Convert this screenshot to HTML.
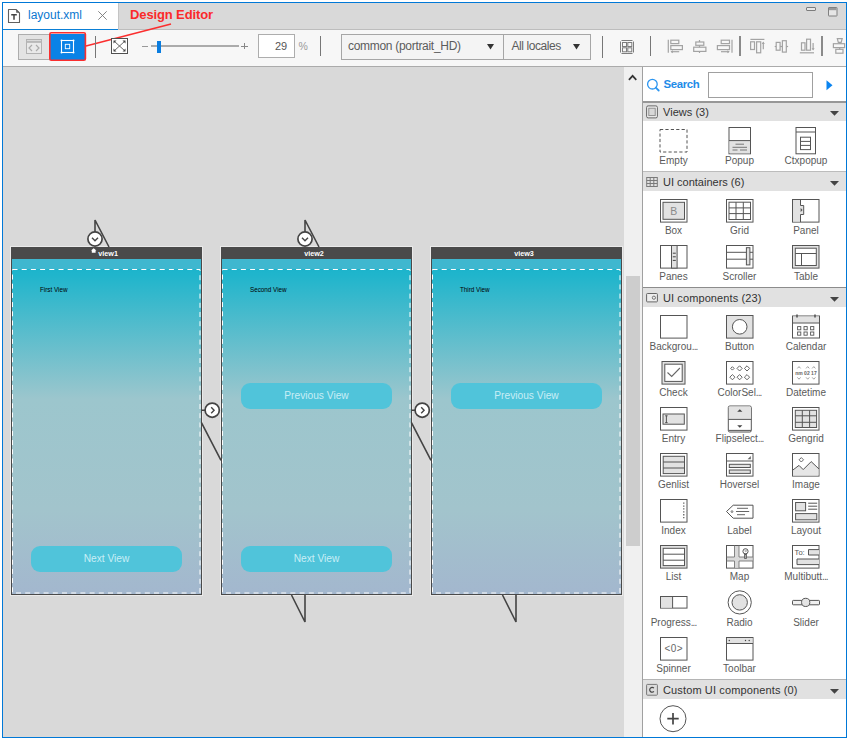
<!DOCTYPE html>
<html lang="en"><head><meta charset="utf-8"><title>layout.xml - Design Editor</title>
<style>
html,body{margin:0;padding:0;background:#fff;}
body{width:850px;height:741px;position:relative;overflow:hidden;font-family:"Liberation Sans",sans-serif;color:#555;}
.a{position:absolute;}
.t{position:absolute;white-space:nowrap;line-height:1;}
svg{position:absolute;overflow:visible;}
.lbl{position:absolute;white-space:nowrap;font-size:10px;line-height:12px;text-align:center;width:80px;color:#5a5a5a;}
.hdr{position:absolute;left:643px;width:203px;height:19px;background:#e1e1e1;}
.hdt{position:absolute;left:663px;white-space:nowrap;font-size:11px;line-height:12px;color:#333;}
.btn{position:absolute;width:151px;height:26px;border-radius:9px;background:#50c4da;color:#c9eef6;font-size:10.2px;line-height:26px;text-align:center;}
.vt{position:absolute;white-space:nowrap;font-size:7.2px;font-weight:700;color:#fff;line-height:8px;}
.vl{position:absolute;white-space:nowrap;font-size:6.3px;color:#000;line-height:8px;}
</style></head>
<body>
<div class="a" style="left:2px;top:2px;width:845px;height:736px;background:#0078d7;"></div>
<div class="a" style="left:3px;top:3px;width:843px;height:734px;background:#fff;"></div>
<div class="a" style="left:3px;top:3px;width:843px;height:27px;background:#d9d9d9;"></div>
<div class="a" style="left:3px;top:29px;width:843px;height:1px;background:#bdbdbd;"></div>
<div class="a" style="left:3px;top:3px;width:115px;height:27px;background:#fff;"></div>
<div class="a" style="left:118px;top:3px;width:1px;height:27px;background:#c4c4c4;"></div>
<div class="a" style="left:3px;top:28.5px;width:115px;height:1.5px;background:#0a7fd6;"></div>
<svg style="left:7px;top:8px" width="14" height="16" viewBox="0 0 14 16" ><path d="M1.5 1.5h7.5l3.5 3.5v9.5h-11z" fill="#fff" stroke="#606060" stroke-width="1.1" stroke-linejoin="round"/><path d="M9.2 1.5l3.3 3.3h-3.3z" fill="#606060"/><path d="M4.2 6.8h5.6M7 6.8v5" stroke="#444" stroke-width="1.5" fill="none"/></svg>
<div class="t" style="left:28px;top:9.03px;font-size:12px;color:#0a78d0;font-weight:400;letter-spacing:0px;">layout.xml</div>
<svg style="left:98px;top:11px" width="9" height="9" viewBox="0 0 9 9" ><path d="M0.3 0.3l8.4 8.4M8.7 0.3l-8.4 8.4" stroke="#777" stroke-width="0.9" fill="none"/></svg>
<div class="t" style="left:130px;top:8.00px;font-size:13px;color:#fb2a2a;font-weight:700;letter-spacing:-0.12px;">Design Editor</div>
<svg style="left:806px;top:7px" width="10" height="4" viewBox="0 0 10 4" ><rect x="0.5" y="0.5" width="9" height="3" rx="0.5" fill="#e8e8e8" stroke="#7c7c7c" stroke-width="1"/></svg>
<svg style="left:828px;top:7px" width="10" height="10" viewBox="0 0 10 10" ><rect x="0.5" y="0.5" width="8.5" height="8.5" rx="0.4" fill="#e6e6e6" stroke="#808080" stroke-width="1"/><rect x="1" y="1" width="7.5" height="2.2" fill="#999"/></svg>
<div class="a" style="left:3px;top:30px;width:843px;height:36px;background:#f7f7f7;"></div>
<div class="a" style="left:3px;top:66px;width:843px;height:1px;background:#ababab;"></div>
<div class="a" style="left:18px;top:34px;width:32px;height:26px;background:#e3e3e3;box-sizing:border-box;border:1px solid #adadad;"></div>
<svg style="left:26px;top:39px" width="16" height="15" viewBox="0 0 16 15" ><rect x="0.5" y="0.5" width="15" height="14" fill="#e9e9e9" stroke="#b2b2b2" stroke-width="1"/><path d="M0.5 2.8h15" stroke="#b8b8b8" stroke-width="2.2"/><path d="M6 6l-3 3l3 3M10 6l3 3l-3 3" stroke="#ababab" stroke-width="1.2" fill="none"/></svg>
<div class="a" style="left:50px;top:34px;width:35px;height:26px;background:#0a82e6;"></div>
<svg style="left:60px;top:39px" width="15" height="15" viewBox="0 0 15 15" ><rect x="1.5" y="1.5" width="12" height="12" fill="none" stroke="#fff" stroke-width="1.1"/><rect x="5.3" y="5.3" width="4.4" height="4.4" fill="none" stroke="#fff" stroke-width="0.9"/><g fill="#fff"><circle cx="1.5" cy="1.5" r="0.95"/><circle cx="13.5" cy="1.5" r="0.95"/><circle cx="1.5" cy="13.5" r="0.95"/><circle cx="13.5" cy="13.5" r="0.95"/></g></svg>
<svg style="left:0px;top:0px" width="850" height="70" viewBox="0 0 850 70" ><rect x="49.8" y="32.8" width="35.6" height="27.4" rx="1.5" fill="none" stroke="#fb2e2e" stroke-width="1.6"/><path d="M86 46L171 24" stroke="#fb2e2e" stroke-width="1.5" fill="none"/></svg>
<div class="a" style="left:95px;top:36px;width:1px;height:22px;background:#777;"></div>
<svg style="left:111px;top:38px" width="17" height="16" viewBox="0 0 17 16" ><rect x="0.5" y="0.5" width="16" height="15" fill="#fff" stroke="#505050" stroke-width="1"/><path d="M3 3l11 10M14 3l-11 10" stroke="#555" stroke-width="0.9" fill="none"/><path d="M2.5 2.5h3l-3 3zM14.5 2.5h-3l3 3zM2.5 13.5h3l-3 -3zM14.5 13.5h-3l3 -3z" fill="#444"/></svg>
<div class="a" style="left:142px;top:45.5px;width:6px;height:1px;background:#999;"></div>
<div class="a" style="left:151px;top:45px;width:88px;height:1.6px;background:#ababab;"></div>
<div class="a" style="left:157px;top:40.5px;width:4px;height:12px;background:#0a7de0;"></div>
<div class="a" style="left:241px;top:45.5px;width:6.5px;height:1px;background:#888;"></div>
<div class="a" style="left:243.7px;top:42.8px;width:1px;height:6.5px;background:#888;"></div>
<div class="a" style="left:258px;top:34px;width:36.5px;height:24px;background:#fff;box-sizing:border-box;border:1px solid #adadad;"></div>
<div class="t" style="left:275px;top:40.56px;font-size:11px;color:#555;font-weight:400;letter-spacing:0px;">29</div>
<div class="t" style="left:298.5px;top:40.98px;font-size:10.5px;color:#9a9a9a;font-weight:400;letter-spacing:0px;">%</div>
<div class="a" style="left:320px;top:36px;width:1px;height:20px;background:#777;"></div>
<div class="a" style="left:340.5px;top:34px;width:250px;height:25.5px;background:#f4f4f4;box-sizing:border-box;border:1px solid #a6a6a6;"></div>
<div class="a" style="left:503px;top:34px;width:1px;height:25.5px;background:#a6a6a6;"></div>
<div class="t" style="left:348px;top:39.83px;font-size:12px;color:#5c5c5c;font-weight:400;letter-spacing:-0.3px;">common (portrait_HD)</div>
<div class="t" style="left:511.5px;top:39.83px;font-size:12px;color:#5c5c5c;font-weight:400;letter-spacing:-0.42px;">All locales</div>
<svg style="left:487px;top:44px" width="7" height="6" viewBox="0 0 7 6" ><path d="M0 0h7l-3.5 5.4z" fill="#333"/></svg>
<svg style="left:573px;top:44px" width="7" height="6" viewBox="0 0 7 6" ><path d="M0 0h7l-3.5 5.4z" fill="#333"/></svg>
<div class="a" style="left:601.5px;top:36px;width:1px;height:21.5px;background:#777;"></div>
<svg style="left:619px;top:39px" width="16" height="16" viewBox="0 0 16 16" ><g stroke="#7d7d7d" stroke-width="1" fill="none"><path d="M2.5 1.5h11M2.5 14.5h11M1.5 2.5v11M14.5 2.5v11"/><rect x="3.5" y="3.5" width="4" height="4"/><rect x="8.8" y="3.5" width="4" height="4"/><rect x="3.5" y="8.8" width="4" height="4"/><rect x="8.8" y="8.8" width="4" height="4"/></g></svg>
<div class="a" style="left:650px;top:36px;width:1px;height:20px;background:#777;"></div>
<svg style="left:667px;top:39px" width="17" height="15" viewBox="0 0 17 15" ><g stroke="#a3a3a3" stroke-width="1.2" fill="none"><path d="M1.3 0.8v13"/><rect x="3.8" y="1.2" width="8" height="3.4"/><rect x="3.8" y="6.6" width="11.6" height="4"/><path d="M4.2 12.7h8"/></g><path d="M3.5 12.7l2.4-1.5v3z" fill="#a3a3a3"/></svg>
<svg style="left:692px;top:39px" width="16" height="15" viewBox="0 0 16 15" ><g stroke="#a3a3a3" stroke-width="1.2" fill="none"><path d="M7.5 1v13"/><rect x="3.8" y="3" width="8" height="3.3" fill="#f7f7f7"/><rect x="1.7" y="8.2" width="12.2" height="4.2" fill="#f7f7f7"/></g></svg>
<svg style="left:716px;top:39px" width="17" height="15" viewBox="0 0 17 15" ><g stroke="#a3a3a3" stroke-width="1.2" fill="none"><path d="M16 0.8v13"/><rect x="5.2" y="1.2" width="8.3" height="3.4"/><rect x="1.4" y="6.6" width="12.1" height="4"/><path d="M5 12.7h8"/></g><path d="M13.8 12.7l-2.4-1.5v3z" fill="#a3a3a3"/></svg>
<div class="a" style="left:739px;top:35.5px;width:1.6px;height:20.5px;background:#8a8a8a;"></div>
<svg style="left:749px;top:38px" width="17" height="16" viewBox="0 0 17 16" ><g stroke="#a3a3a3" stroke-width="1.2" fill="none"><path d="M1.4 1.4h14"/><rect x="1.6" y="3.8" width="3.9" height="7.7"/><rect x="7.6" y="3.8" width="4.1" height="11"/><path d="M14.3 4.6v6.6"/></g><path d="M14.3 3.6l1.5 2.4h-3z" fill="#a3a3a3"/></svg>
<svg style="left:774px;top:39px" width="16" height="15" viewBox="0 0 16 15" ><g stroke="#a3a3a3" stroke-width="1.2" fill="none"><path d="M0.7 7.5h13.4"/><rect x="2.2" y="3.4" width="3.9" height="7.8" fill="#f7f7f7"/><rect x="8.4" y="1.7" width="3.9" height="11.4" fill="#f7f7f7"/></g></svg>
<svg style="left:799px;top:38px" width="17" height="16" viewBox="0 0 17 16" ><g stroke="#a3a3a3" stroke-width="1.2" fill="none"><path d="M0.8 14.8h14.2"/><rect x="2.5" y="4.8" width="3.5" height="7.4"/><rect x="7.6" y="1.2" width="3.9" height="11"/><path d="M14.1 5v6.4"/></g><path d="M14.1 12.6l1.5-2.4h-3z" fill="#a3a3a3"/></svg>
<div class="a" style="left:821px;top:36px;width:1.6px;height:19.6px;background:#8a8a8a;"></div>
<svg style="left:832px;top:38px" width="14" height="16" viewBox="0 0 14 16" ><g stroke="#a3a3a3" stroke-width="1.2" fill="none"><path d="M5.3 0.6h4.9l-1 3.8h-2.9z"/><rect x="1.4" y="5.7" width="11.2" height="3.9"/><rect x="3.8" y="11.3" width="7.2" height="3.9"/><path d="M7.7 4.4v1.3M7.7 9.6v1.7"/></g></svg>
<div class="a" style="left:3px;top:67px;width:621px;height:670px;background:#d9d9d9;"></div>
<div class="a" style="left:624px;top:67px;width:18px;height:670px;background:#f0f0f0;"></div>
<div class="a" style="left:626px;top:276px;width:13.5px;height:270px;background:#cdcdcd;"></div>
<svg style="left:627px;top:72.5px" width="11" height="8" viewBox="0 0 11 8" ><path d="M1.9 6.8l3.7-4l3.7 4" stroke="#333" stroke-width="1.7" fill="none"/></svg>
<div class="a" style="left:642px;top:67px;width:1px;height:670px;background:#a0a0a0;"></div>
<div class="a" style="left:10px;top:246px;width:192.5px;height:350px;background:rgba(255,255,255,0.45);"></div>
<div class="a" style="left:11px;top:247px;width:190.5px;height:348px;background:#4a4a4a;"></div>
<div class="a" style="left:12px;top:258.6px;width:188.5px;height:11px;background:#3fb7cf;"></div>
<div class="a" style="left:12px;top:269px;width:188.5px;height:325px;background:linear-gradient(to bottom,#1cb4cc 0%,#20b5cc 2%,#9cc6cd 40%,#a2c4cc 74%,#a3b7ce 100%);"></div>
<svg style="left:11px;top:247px" width="190.5" height="348" viewBox="0 0 190.5 348" ><rect x="1.5" y="22.5" width="187.5" height="323.5" fill="none" stroke="#fff" stroke-width="1" stroke-dasharray="5 4.2"/></svg>
<div class="vt" style="left:98.3px;top:250.2px">view1</div>
<svg style="left:90.6px;top:248.4px" width="6" height="5" viewBox="0 0 6 5" ><path d="M2.7 0.2l2.7 2.3h-0.8v2.2h-3.8v-2.2h-0.8z" fill="#fff"/></svg>
<div class="vl" style="left:40px;top:286px">First View</div>
<div class="btn" style="left:31px;top:545.6px">Next View</div>
<div class="a" style="left:220px;top:246px;width:192.5px;height:350px;background:rgba(255,255,255,0.45);"></div>
<div class="a" style="left:221px;top:247px;width:190.5px;height:348px;background:#4a4a4a;"></div>
<div class="a" style="left:222px;top:258.6px;width:188.5px;height:11px;background:#3fb7cf;"></div>
<div class="a" style="left:222px;top:269px;width:188.5px;height:325px;background:linear-gradient(to bottom,#1cb4cc 0%,#20b5cc 2%,#9cc6cd 40%,#a2c4cc 74%,#a3b7ce 100%);"></div>
<svg style="left:221px;top:247px" width="190.5" height="348" viewBox="0 0 190.5 348" ><rect x="1.5" y="22.5" width="187.5" height="323.5" fill="none" stroke="#fff" stroke-width="1" stroke-dasharray="5 4.2"/></svg>
<div class="vt" style="left:304.2px;top:250.2px">view2</div>
<div class="vl" style="left:250px;top:286px">Second View</div>
<div class="btn" style="left:241px;top:382.8px">Previous View</div>
<div class="btn" style="left:241px;top:545.6px">Next View</div>
<div class="a" style="left:430px;top:246px;width:192.5px;height:350px;background:rgba(255,255,255,0.45);"></div>
<div class="a" style="left:431px;top:247px;width:190.5px;height:348px;background:#4a4a4a;"></div>
<div class="a" style="left:432px;top:258.6px;width:188.5px;height:11px;background:#3fb7cf;"></div>
<div class="a" style="left:432px;top:269px;width:188.5px;height:325px;background:linear-gradient(to bottom,#1cb4cc 0%,#20b5cc 2%,#9cc6cd 40%,#a2c4cc 74%,#a3b7ce 100%);"></div>
<svg style="left:431px;top:247px" width="190.5" height="348" viewBox="0 0 190.5 348" ><rect x="1.5" y="22.5" width="187.5" height="323.5" fill="none" stroke="#fff" stroke-width="1" stroke-dasharray="5 4.2"/></svg>
<div class="vt" style="left:514.2px;top:250.2px">view3</div>
<div class="vl" style="left:460px;top:286px">Third View</div>
<div class="btn" style="left:451px;top:382.8px">Previous View</div>
<svg style="left:85px;top:215px" width="30" height="35" viewBox="0 0 30 35" ><path d="M10 24.5V5L24 32" stroke="#444" stroke-width="1.6" fill="none" stroke-linejoin="miter"/><circle cx="10" cy="24" r="7.1" fill="#fff" stroke="#444" stroke-width="1.7"/><path d="M7 22.8l3 2.9l3-2.9" stroke="#444" stroke-width="1.4" fill="none"/></svg>
<svg style="left:295px;top:215px" width="30" height="35" viewBox="0 0 30 35" ><path d="M10 24.5V5L24 32" stroke="#444" stroke-width="1.6" fill="none" stroke-linejoin="miter"/><circle cx="10" cy="24" r="7.1" fill="#fff" stroke="#444" stroke-width="1.7"/><path d="M7 22.8l3 2.9l3-2.9" stroke="#444" stroke-width="1.4" fill="none"/></svg>
<svg style="left:200.3px;top:400px" width="24" height="64" viewBox="0 0 24 64" ><path d="M1 10.2h4M1.3 22.3L21 60.4" stroke="#444" stroke-width="1.6" fill="none" stroke-linejoin="miter"/><circle cx="12.2" cy="10.2" r="7.1" fill="#fff" stroke="#444" stroke-width="1.7"/><path d="M11.2 7.2l2.9 3l-2.9 3" stroke="#444" stroke-width="1.4" fill="none"/></svg>
<svg style="left:410.3px;top:400px" width="24" height="64" viewBox="0 0 24 64" ><path d="M1 10.2h4M1.3 22.3L21 60.4" stroke="#444" stroke-width="1.6" fill="none" stroke-linejoin="miter"/><circle cx="12.2" cy="10.2" r="7.1" fill="#fff" stroke="#444" stroke-width="1.7"/><path d="M11.2 7.2l2.9 3l-2.9 3" stroke="#444" stroke-width="1.4" fill="none"/></svg>
<svg style="left:289px;top:594px" width="20" height="30" viewBox="0 0 20 30" ><path d="M2.5 1L16 28V1" stroke="#444" stroke-width="1.6" fill="none" stroke-linejoin="miter"/></svg>
<svg style="left:499.5px;top:594px" width="20" height="30" viewBox="0 0 20 30" ><path d="M2.5 1L16 28V1" stroke="#444" stroke-width="1.6" fill="none" stroke-linejoin="miter"/></svg>
<div class="a" style="left:643px;top:67px;width:203px;height:670px;background:#fff;"></div>
<svg style="left:646px;top:77px" width="16" height="16" viewBox="0 0 16 16" ><circle cx="6.4" cy="7.2" r="4.8" fill="none" stroke="#2b95f0" stroke-width="1.3"/><path d="M9.8 10.7l2.9 2.8" stroke="#2b95f0" stroke-width="1.8" stroke-linecap="round"/></svg>
<div class="t" style="left:663.5px;top:78.73px;font-size:11.4px;color:#1e8ce8;font-weight:700;letter-spacing:-0.35px;">Search</div>
<div class="a" style="left:708px;top:72px;width:105px;height:26px;background:#fff;box-sizing:border-box;border:1px solid #a0a0a0;"></div>
<svg style="left:826px;top:80px" width="7" height="11" viewBox="0 0 7 11" ><path d="M0.5 0.2L6.5 5.2L0.5 10.2z" fill="#0a84f0"/></svg>
<div class="a" style="left:643px;top:101px;width:203px;height:1.6px;background:#979797;"></div>
<div class="a" style="left:643px;top:102.6px;width:203px;height:18.0px;background:#e1e1e1;"></div>
<div class="hdt" style="top:105.6px;letter-spacing:0.03px">Views (3)</div>
<svg style="left:646px;top:105px" width="12" height="14" viewBox="0 0 12 14" ><rect x="0.6" y="0.9" width="10.8" height="12" rx="1.5" fill="#eee" stroke="#666" stroke-width="1"/><rect x="2.8" y="3.2" width="6.4" height="7.4" fill="#d8d8d8" stroke="#888" stroke-width="0.9"/></svg>
<svg style="left:830px;top:111px" width="9" height="5" viewBox="0 0 9 5" ><path d="M0 0h9l-4.5 4.8z" fill="#444"/></svg>
<div class="a" style="left:643px;top:171px;width:203px;height:1px;background:#bcbcbc;"></div>
<div class="a" style="left:643px;top:172px;width:203px;height:18.6px;background:#e1e1e1;"></div>
<div class="hdt" style="top:175.6px;letter-spacing:0px">UI containers (6)</div>
<svg style="left:646px;top:175px" width="12" height="14" viewBox="0 0 12 14" ><g stroke="#7a7a7a" stroke-width="1" fill="none"><rect x="0.7" y="2.5" width="10.6" height="9"/><path d="M0.7 5.5h10.6M0.7 8.5h10.6M4.2 2.5v9M7.8 2.5v9"/></g></svg>
<svg style="left:830px;top:181px" width="9" height="5" viewBox="0 0 9 5" ><path d="M0 0h9l-4.5 4.8z" fill="#444"/></svg>
<div class="a" style="left:643px;top:287px;width:203px;height:1px;background:#8c8c8c;"></div>
<div class="a" style="left:643px;top:288px;width:203px;height:18.6px;background:#e1e1e1;"></div>
<div class="hdt" style="top:291.6px;letter-spacing:0.1px">UI components (23)</div>
<svg style="left:646px;top:291px" width="12" height="14" viewBox="0 0 12 14" ><rect x="0.6" y="2.5" width="10.8" height="8.4" rx="0.8" fill="#eee" stroke="#666" stroke-width="1"/><circle cx="7.9" cy="6.7" r="1.6" fill="none" stroke="#666" stroke-width="0.9"/></svg>
<svg style="left:830px;top:297px" width="9" height="5" viewBox="0 0 9 5" ><path d="M0 0h9l-4.5 4.8z" fill="#444"/></svg>
<div class="a" style="left:643px;top:679px;width:203px;height:1px;background:#b4b4b4;"></div>
<div class="a" style="left:643px;top:680px;width:203px;height:18.6px;background:#e1e1e1;"></div>
<div class="hdt" style="top:683.6px;letter-spacing:0.13px">Custom UI components (0)</div>
<svg style="left:646px;top:683px" width="12" height="14" viewBox="0 0 12 14" ><rect x="0.6" y="1.4" width="10.8" height="10.8" rx="0.8" fill="#dcdcdc" stroke="#777" stroke-width="1"/><path d="M7.9 5.2a2.4 2.4 0 1 0 0 3.2" fill="none" stroke="#444" stroke-width="1.2"/></svg>
<svg style="left:830px;top:689px" width="9" height="5" viewBox="0 0 9 5" ><path d="M0 0h9l-4.5 4.8z" fill="#444"/></svg>
<svg style="left:660px;top:127px" width="28" height="28" viewBox="0 0 28 28" ><rect x="0" y="2.5" width="27" height="22.5" fill="none" stroke="#555" stroke-width="1" stroke-dasharray="3.2 2.2"/></svg>
<div class="lbl" style="left:633.5px;top:155.0px">Empty</div>
<svg style="left:726px;top:127px" width="28" height="28" viewBox="0 0 28 28" ><rect x="3" y="0.5" width="21.5" height="26.3" fill="#fff" stroke="#555"/><rect x="3.5" y="13.6" width="20.5" height="12.7" fill="#e2e2e2"/><path d="M3 13.6h21.5" stroke="#555" stroke-width="1" fill="none"/><path d="M9.5 17.2h8.5M6.5 20.3h14.5M6.5 23h5M14 23h7" stroke="#777" stroke-width="1" fill="none"/></svg>
<div class="lbl" style="left:699.5px;top:155.0px">Popup</div>
<svg style="left:792px;top:127px" width="28" height="28" viewBox="0 0 28 28" ><rect x="4" y="0.5" width="19.5" height="26.3" fill="#fff" stroke="#555"/><path d="M4 5h19.5" stroke="#555" stroke-width="1" fill="none"/><rect x="8.5" y="10.2" width="10" height="12.4" fill="#fff" stroke="#555"/><path d="M8.5 14.4h10M8.5 18.4h10" stroke="#555" stroke-width="1" fill="none"/></svg>
<div class="lbl" style="left:766px;top:155.0px">Ctxpopup</div>
<svg style="left:660px;top:199px" width="28" height="28" viewBox="0 0 28 28" ><rect x="0.5" y="0.5" width="26.5" height="22.6" fill="#fff" stroke="#555" stroke-width="1"/><rect x="3" y="3.3" width="21.5" height="17" fill="#e2e2e2" stroke="#555"/><text x="13.7" y="15.7" font-size="10.5" fill="#8a8a8a" text-anchor="middle" font-family="Liberation Sans, sans-serif">B</text></svg>
<div class="lbl" style="left:633.5px;top:224.8px">Box</div>
<svg style="left:726px;top:199px" width="28" height="28" viewBox="0 0 28 28" ><rect x="0.5" y="0.5" width="26.5" height="22.6" fill="#fff" stroke="#555" stroke-width="1"/><rect x="3" y="3.2" width="21.5" height="17.3" fill="#fff" stroke="#555"/><path d="M3 8.9h21.5M3 14.6h21.5M10 3.2v17.3M17.3 3.2v17.3" stroke="#555" stroke-width="1" fill="none"/></svg>
<div class="lbl" style="left:699.5px;top:224.8px">Grid</div>
<svg style="left:792px;top:199px" width="28" height="28" viewBox="0 0 28 28" ><rect x="0.5" y="0.5" width="26.5" height="22.6" fill="#fff" stroke="#555" stroke-width="1"/><path d="M1 1h7.5v5.5h3v9h-3v7.1H1z" fill="#e2e2e2"/><path d="M8.5 0.5v6h3.2v9H8.5v7.6" stroke="#555" stroke-width="1" fill="none"/><path d="M8.6 9l2 2l-2 2z" fill="#555"/></svg>
<div class="lbl" style="left:766px;top:224.8px">Panel</div>
<svg style="left:660px;top:245px" width="28" height="28" viewBox="0 0 28 28" ><rect x="0.5" y="0.5" width="26.5" height="22.6" fill="#fff" stroke="#555" stroke-width="1"/><rect x="11.5" y="0.5" width="5.6" height="22.6" fill="#e2e2e2" stroke="#555"/><path d="M12.8 8.2h3M12.8 11.8h3M12.8 15.4h3" stroke="#444" stroke-width="1" fill="none"/></svg>
<div class="lbl" style="left:633.5px;top:270.8px">Panes</div>
<svg style="left:726px;top:245px" width="28" height="28" viewBox="0 0 28 28" ><rect x="0.5" y="0.5" width="26.5" height="22.6" fill="#fff" stroke="#555" stroke-width="1"/><path d="M0.5 7.3h26.5M0.5 14.2h26.5" stroke="#555" stroke-width="1" fill="none"/><rect x="20.4" y="2.7" width="3.5" height="17.2" fill="#e2e2e2" stroke="#555"/></svg>
<div class="lbl" style="left:699.5px;top:270.8px">Scroller</div>
<svg style="left:792px;top:245px" width="28" height="28" viewBox="0 0 28 28" ><rect x="0.5" y="0.5" width="26.5" height="22.6" fill="#e2e2e2" stroke="#555"/><rect x="3.3" y="3.2" width="21" height="17.3" fill="#fff" stroke="#555"/><path d="M3.3 8.5h21M9.5 8.5v12" stroke="#555" stroke-width="1" fill="none"/></svg>
<div class="lbl" style="left:766px;top:270.8px">Table</div>
<svg style="left:660px;top:315px" width="28" height="28" viewBox="0 0 28 28" ><rect x="0.5" y="0.5" width="26.5" height="22.6" fill="#fff" stroke="#555" stroke-width="1"/></svg>
<div class="lbl" style="left:633.5px;top:340.8px">Backgrou<span style="letter-spacing:-0.9px">...</span></div>
<svg style="left:726px;top:315px" width="28" height="28" viewBox="0 0 28 28" ><rect x="0.5" y="0.5" width="26.5" height="22.6" fill="#e2e2e2" stroke="#555"/><circle cx="13.7" cy="11.8" r="7.3" fill="#fff" stroke="#555"/></svg>
<div class="lbl" style="left:699.5px;top:340.8px">Button</div>
<svg style="left:792px;top:315px" width="28" height="28" viewBox="0 0 28 28" ><rect x="0.5" y="1" width="27" height="22" fill="#fff" stroke="#555"/><rect x="1" y="1.5" width="26" height="6.3" fill="#e2e2e2"/><path d="M0.5 8h27" stroke="#555" stroke-width="1" fill="none"/><path d="M5 -0.5v3M23 -0.5v3" stroke="#555" stroke-width="1.6"/><rect x="5.6" y="11.6" width="3.2" height="3.2" fill="none" stroke="#555" stroke-width="0.9"/><rect x="12" y="11.6" width="3.2" height="3.2" fill="none" stroke="#555" stroke-width="0.9"/><rect x="18.6" y="11.6" width="3.2" height="3.2" fill="none" stroke="#555" stroke-width="0.9"/><rect x="5.6" y="17" width="3.2" height="3.2" fill="none" stroke="#555" stroke-width="0.9"/><rect x="12" y="17" width="3.2" height="3.2" fill="none" stroke="#555" stroke-width="0.9"/><rect x="18.6" y="17" width="3.2" height="3.2" fill="none" stroke="#555" stroke-width="0.9"/></svg>
<div class="lbl" style="left:766px;top:340.8px">Calendar</div>
<svg style="left:660px;top:361px" width="28" height="28" viewBox="0 0 28 28" ><rect x="2" y="0.5" width="23" height="22.6" fill="#e2e2e2" stroke="#555"/><rect x="4.8" y="3.2" width="17.4" height="17.2" fill="#fff" stroke="#555"/><path d="M7.5 11.5l4.2 4l8.2-8.5" stroke="#666" stroke-width="1.1" fill="none"/></svg>
<div class="lbl" style="left:633.5px;top:386.8px">Check</div>
<svg style="left:726px;top:361px" width="28" height="28" viewBox="0 0 28 28" ><rect x="0.5" y="0.5" width="26.5" height="22.6" fill="#fff" stroke="#555" stroke-width="1"/><path d="M4.7 7.4L6.4 5.7L8.1 7.4L6.4 9.1z" fill="none" stroke="#555" stroke-width="0.9"/><path d="M11.0 7.4L13.6 4.800000000000001L16.2 7.4L13.6 10.0z" fill="none" stroke="#555" stroke-width="0.9"/><path d="M18.4 7.4L21 4.800000000000001L23.6 7.4L21 10.0z" fill="none" stroke="#555" stroke-width="0.9"/><path d="M3.8000000000000003 16.2L6.4 13.6L9.0 16.2L6.4 18.8z" fill="none" stroke="#555" stroke-width="0.9"/><path d="M11.0 16.2L13.6 13.6L16.2 16.2L13.6 18.8z" fill="none" stroke="#555" stroke-width="0.9"/><path d="M18.4 16.2L21 13.6L23.6 16.2L21 18.8z" fill="none" stroke="#555" stroke-width="0.9"/></svg>
<div class="lbl" style="left:699.5px;top:386.8px">ColorSel<span style="letter-spacing:-0.9px">...</span></div>
<svg style="left:792px;top:361px" width="28" height="28" viewBox="0 0 28 28" ><rect x="0.5" y="0.5" width="26.5" height="22.6" fill="#fff" stroke="#555" stroke-width="1"/><path d="M5.4 7.4L7 5.6L8.6 7.4" fill="none" stroke="#888" stroke-width="0.8"/><path d="M14.1 7.4L15.7 5.6L17.3 7.4" fill="none" stroke="#888" stroke-width="0.8"/><path d="M20.2 7.4L21.8 5.6L23.400000000000002 7.4" fill="none" stroke="#888" stroke-width="0.8"/><path d="M5.4 16.400000000000002L7 18.2L8.6 16.400000000000002" fill="none" stroke="#888" stroke-width="0.8"/><path d="M14.1 16.400000000000002L15.7 18.2L17.3 16.400000000000002" fill="none" stroke="#888" stroke-width="0.8"/><path d="M20.2 16.400000000000002L21.8 18.2L23.400000000000002 16.400000000000002" fill="none" stroke="#888" stroke-width="0.8"/><text x="3.2" y="14.2" font-size="5.2" font-weight="700" fill="#666" font-family="Liberation Sans, sans-serif" textLength="21.5" lengthAdjust="spacingAndGlyphs">nm 02 17</text></svg>
<div class="lbl" style="left:766px;top:386.8px">Datetime</div>
<svg style="left:660px;top:407px" width="28" height="28" viewBox="0 0 28 28" ><rect x="0.5" y="0.5" width="26.5" height="22.6" fill="#fff" stroke="#555" stroke-width="1"/><rect x="3" y="7" width="21.3" height="10.2" fill="#e2e2e2" stroke="#555"/><path d="M5.2 8.8h2.4M5.2 15.6h2.4M6.4 8.8v6.8" stroke="#444" stroke-width="0.9" fill="none"/></svg>
<div class="lbl" style="left:633.5px;top:432.8px">Entry</div>
<svg style="left:726px;top:407px" width="28" height="28" viewBox="0 0 28 28" ><rect x="2.3" y="-1" width="23" height="26" rx="1.5" fill="#fff" stroke="#555"/><path d="M2.8 12.2V0.8a1.3 1.3 0 0 1 1.3-1.3h19.4a1.3 1.3 0 0 1 1.3 1.3v11.4z" fill="#e2e2e2"/><path d="M2.3 12.4h23M2.5 23.4h22.6" stroke="#555" stroke-width="1" fill="none"/><path d="M11.2 4.8l2.6-2.5l2.6 2.5zM11.2 18.3l2.6 2.5l2.6-2.5z" fill="#444"/></svg>
<div class="lbl" style="left:699.5px;top:432.8px">Flipselect<span style="letter-spacing:-0.9px">...</span></div>
<svg style="left:792px;top:407px" width="28" height="28" viewBox="0 0 28 28" ><rect x="0.5" y="0.5" width="26.5" height="22.6" fill="#fff" stroke="#555" stroke-width="1"/><rect x="3.3" y="3.3" width="21.3" height="17.2" fill="#e2e2e2" stroke="#555"/><path d="M3.3 8.8h21.3M3.3 15.3h21.3M10.3 3.3v17.2M17.6 3.3v17.2" stroke="#555" stroke-width="1" fill="none"/></svg>
<div class="lbl" style="left:766px;top:432.8px">Gengrid</div>
<svg style="left:660px;top:453px" width="28" height="28" viewBox="0 0 28 28" ><rect x="0.5" y="0.5" width="26.5" height="22.6" fill="#fff" stroke="#555" stroke-width="1"/><rect x="3.2" y="3.3" width="21.3" height="17.3" fill="#e2e2e2" stroke="#555"/><path d="M3.2 9h21.3M3.2 15h21.3" stroke="#555" stroke-width="1" fill="none"/></svg>
<div class="lbl" style="left:633.5px;top:478.8px">Genlist</div>
<svg style="left:726px;top:453px" width="28" height="28" viewBox="0 0 28 28" ><rect x="0.5" y="0.5" width="26.5" height="22.6" fill="#fff" stroke="#555" stroke-width="1"/><path d="M0.5 8h26.5" stroke="#555" stroke-width="1" fill="none"/><path d="M24.8 3v3.2h-3.2z" fill="#666"/><rect x="3.3" y="11.3" width="21" height="3.2" fill="#e2e2e2" stroke="#555"/><rect x="3.3" y="17" width="21" height="3.4" fill="#e2e2e2" stroke="#555"/></svg>
<div class="lbl" style="left:699.5px;top:478.8px">Hoversel</div>
<svg style="left:792px;top:453px" width="28" height="28" viewBox="0 0 28 28" ><rect x="0.5" y="0.5" width="26.5" height="22.6" fill="#fff" stroke="#555" stroke-width="1"/><path d="M1 17l6-4.6l4.2 4.2l8-8l7.3 7v6.9H1z" fill="#e6e6e6"/><path d="M0.5 17.3l6.5-4.9l4.2 4.2l8-8l7.8 7.4" stroke="#555" stroke-width="1" fill="none"/><path d="M7.1000000000000005 6.8L9.3 4.6L11.5 6.8L9.3 9.0z" fill="none" stroke="#555" stroke-width="0.9"/></svg>
<div class="lbl" style="left:766px;top:478.8px">Image</div>
<svg style="left:660px;top:499px" width="28" height="28" viewBox="0 0 28 28" ><rect x="0.5" y="0.5" width="26.5" height="22.6" fill="#fff" stroke="#555" stroke-width="1"/><path d="M23.8 3.5v17" stroke="#444" stroke-width="1.1" stroke-dasharray="1.3 1.6" fill="none"/></svg>
<div class="lbl" style="left:633.5px;top:524.8px">Index</div>
<svg style="left:726px;top:499px" width="28" height="28" viewBox="0 0 28 28" ><path d="M0.5 12.5L7.2 6.2H27v13H7.2z" fill="#fff" stroke="#555" stroke-linejoin="round"/><circle cx="6" cy="12.6" r="0.9" fill="none" stroke="#555" stroke-width="0.8"/><path d="M11 9.3h11M10 12.5h13.2M11 15.7h8" stroke="#666" stroke-width="1" fill="none"/></svg>
<div class="lbl" style="left:699.5px;top:524.8px">Label</div>
<svg style="left:792px;top:499px" width="28" height="28" viewBox="0 0 28 28" ><rect x="0.5" y="0.5" width="26.5" height="22.6" fill="#fff" stroke="#555" stroke-width="1"/><rect x="3.6" y="3.5" width="10" height="8.3" fill="#e2e2e2" stroke="#555"/><path d="M16.2 4.2h9M16.2 7.2h9M16.2 10.2h9" stroke="#555" stroke-width="1" fill="none"/><rect x="3.6" y="14.6" width="21.2" height="6.2" fill="#e2e2e2" stroke="#555"/></svg>
<div class="lbl" style="left:766px;top:524.8px">Layout</div>
<svg style="left:660px;top:545px" width="28" height="28" viewBox="0 0 28 28" ><rect x="0.5" y="0.5" width="26.5" height="22.6" fill="#e2e2e2" stroke="#555"/><rect x="3.2" y="3.3" width="21.3" height="17.3" fill="#fff" stroke="#555"/><path d="M3.2 9.2h21.3M3.2 15.2h21.3" stroke="#555" stroke-width="1" fill="none"/></svg>
<div class="lbl" style="left:633.5px;top:570.8px">List</div>
<svg style="left:726px;top:545px" width="28" height="28" viewBox="0 0 28 28" ><rect x="0.5" y="0.5" width="26.5" height="22.6" fill="#fff" stroke="#555" stroke-width="1"/><rect x="8.5" y="1" width="4.5" height="21.6" fill="#d9d9d9"/><rect x="1" y="12" width="25.5" height="4" fill="#d9d9d9"/><path d="M8.5 0.5v11.5H0.5M13 0.5v11.5h14M8.5 23v-7H0.5M13 23v-7h14" stroke="#777" stroke-width="0.9" fill="none"/><circle cx="19.5" cy="6.3" r="2.6" fill="#fff" stroke="#555"/><rect x="18.6" y="9" width="1.8" height="4.5" fill="#aaa" stroke="#555" stroke-width="0.8"/><circle cx="19.7" cy="5.9" r="0.8" fill="none" stroke="#777" stroke-width="0.6"/></svg>
<div class="lbl" style="left:699.5px;top:570.8px">Map</div>
<svg style="left:792px;top:545px" width="28" height="28" viewBox="0 0 28 28" ><rect x="0.5" y="0.5" width="26.5" height="22.6" fill="#fff" stroke="#555" stroke-width="1"/><text x="2.6" y="10.2" font-size="7.6" fill="#555" font-family="Liberation Sans, sans-serif">To:</text><path d="M27 4.6H16.5v5.4H27z" fill="#e2e2e2"/><path d="M27 4.6H16.5v5.4H27" stroke="#555" stroke-width="1" fill="none"/><path d="M27 14H5v5.6H27z" fill="#e2e2e2"/><path d="M27 14H5v5.6H27" stroke="#555" stroke-width="1" fill="none"/></svg>
<div class="lbl" style="left:766px;top:570.8px">Multibutt<span style="letter-spacing:-0.9px">...</span></div>
<svg style="left:660px;top:591px" width="28" height="28" viewBox="0 0 28 28" ><rect x="0.5" y="5.5" width="26.5" height="11.6" fill="#fff" stroke="#555"/><rect x="1" y="6" width="11.5" height="10.6" fill="#e2e2e2"/><path d="M12.6 5.5v11.6" stroke="#555" stroke-width="1" fill="none"/></svg>
<div class="lbl" style="left:633.5px;top:616.8px">Progress<span style="letter-spacing:-0.9px">...</span></div>
<svg style="left:726px;top:591px" width="28" height="28" viewBox="0 0 28 28" ><circle cx="13.7" cy="11.4" r="11.6" fill="#fff" stroke="#555"/><circle cx="13.7" cy="11.4" r="7.7" fill="#e2e2e2" stroke="#555"/></svg>
<div class="lbl" style="left:699.5px;top:616.8px">Radio</div>
<svg style="left:792px;top:591px" width="28" height="28" viewBox="0 0 28 28" ><rect x="0.5" y="9.4" width="27" height="4.4" rx="0.8" fill="#f0f0f0" stroke="#555"/><circle cx="13.7" cy="11.4" r="4.1" fill="#e4e4e4" stroke="#555"/><path d="M10.2 11.4a3.6 3.6 0 0 1 7 0" fill="#e4e4e4" stroke="none"/></svg>
<div class="lbl" style="left:766px;top:616.8px">Slider</div>
<svg style="left:660px;top:637px" width="28" height="28" viewBox="0 0 28 28" ><rect x="0.5" y="0.5" width="26.5" height="22.6" fill="#fff" stroke="#555" stroke-width="1"/><text x="13.7" y="15.4" font-size="10" fill="#666" text-anchor="middle" font-family="Liberation Sans, sans-serif" letter-spacing="0.4">&lt;0&gt;</text></svg>
<div class="lbl" style="left:633.5px;top:662.8px">Spinner</div>
<svg style="left:726px;top:637px" width="28" height="28" viewBox="0 0 28 28" ><rect x="0.5" y="0.5" width="26.5" height="22.6" fill="#fff" stroke="#555" stroke-width="1"/><rect x="1" y="1" width="25.5" height="5.3" fill="#e2e2e2"/><path d="M0.5 6.5h26.5" stroke="#555" stroke-width="1" fill="none"/><circle cx="3.3" cy="3.5" r="0.7" fill="#444"/><circle cx="19.5" cy="3.5" r="0.7" fill="#444"/><circle cx="23.2" cy="3.5" r="0.7" fill="#444"/></svg>
<div class="lbl" style="left:699.5px;top:662.8px">Toolbar</div>
<svg style="left:659px;top:705px" width="28" height="28" viewBox="0 0 28 28" ><circle cx="14" cy="13.7" r="13" fill="#fff" stroke="#555" stroke-width="1"/><path d="M8.3 13.7h11.4M14 8v11.4" stroke="#444" stroke-width="1.7" fill="none"/></svg>
</body></html>
